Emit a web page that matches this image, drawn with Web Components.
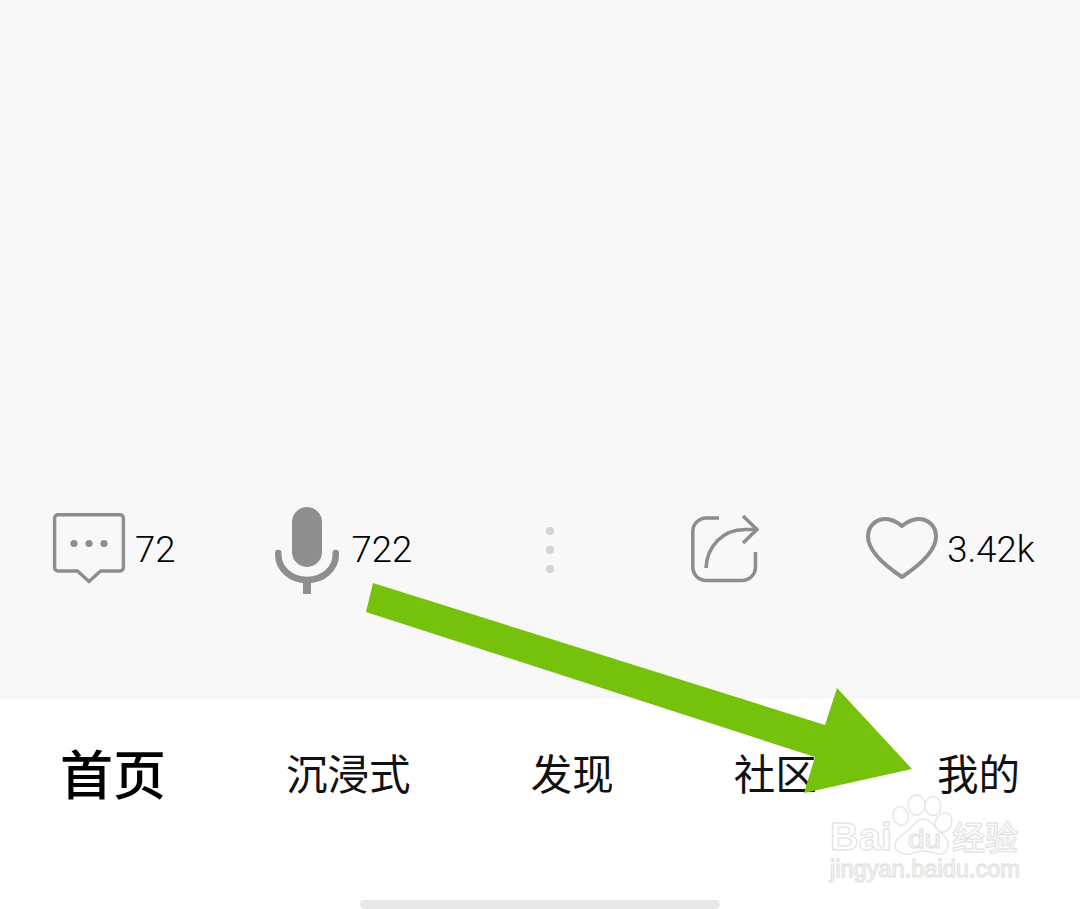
<!DOCTYPE html>
<html lang="zh">
<head>
<meta charset="utf-8">
<title>Reference</title>
<style>
  html, body { margin: 0; padding: 0; background: #fff; }
  body { width: 1080px; height: 909px; overflow: hidden; position: relative; font-family: Roboto, "Noto Sans CJK SC", sans-serif; }
</style>
</head>
<body>
<app-screen>
  <action-bar>
    <action-item gap="0" count="72" textgap="10">
      <svg width="72" height="70" viewBox="0 0 72 70" fill="none" stroke="#8e8e8e" stroke-width="3.4" stroke-linejoin="round">
        <path d="M5 1.7H67a3.4 3.4 0 0 1 3.4 3.4V54.6a3.4 3.4 0 0 1-3.4 3.4H47.5L36 68.6 24.5 58H5a3.4 3.4 0 0 1-3.4-3.4V5.1A3.4 3.4 0 0 1 5 1.7Z"/>
        <g fill="#8e8e8e" stroke="none"><circle cx="21" cy="30.500" r="3.600"/><circle cx="36" cy="30.500" r="3.600"/><circle cx="51" cy="30.500" r="3.600"/></g>
      </svg>
    </action-item>
    <action-item gap="99" count="722" textgap="13">
      <svg style="margin-top:4px" width="64" height="87" viewBox="0 0 64 87" fill="none" stroke="#8e8e8e" stroke-width="6.500">
        <rect x="17" y="0" width="30" height="60" rx="15" fill="#8e8e8e" stroke="none"/>
        <path d="M3.300 46V48A28.700 25 0 0 0 60.700 48V46" stroke-linecap="round"/>
        <path d="M32 74V87" stroke-width="8"/>
      </svg>
    </action-item>
    <more-dots></more-dots>
    <action-item gap="137" textgap="0">
      <svg width="68" height="68" viewBox="0 0 68 68" fill="none" stroke="#8e8e8e" stroke-width="3.500">
        <path d="M28 4H15A13.500 13.500 0 0 0 1.800 17.500V53A13.500 13.500 0 0 0 15 66.500H51A13.500 13.500 0 0 0 64.500 53V38"/>
        <path d="M15 54C16 32 32 15.500 54 15.500H66"/>
        <path d="M52 2L66 15.500L52 29"/>
      </svg>
    </action-item>
    <action-item gap="107" count="3.42k" textgap="9">
      <svg width="72" height="62" viewBox="0 0 72 62" fill="none" stroke="#8e8e8e" stroke-width="4">
        <path d="M36 60C24 52 2 36 2 19.500C2 9 10 2 19.500 2C26 2 31 5 36 9C41 5 46 2 52.500 2C62 2 70 9 70 19.500C70 36 48 52 36 60Z" stroke-linejoin="round"/>
      </svg>
    </action-item>
  </action-bar>
  <tab-bar>
    <tab-item active>首页</tab-item>
    <tab-item>沉浸式</tab-item>
    <tab-item>发现</tab-item>
    <tab-item>社区</tab-item>
    <tab-item>我的</tab-item>
  </tab-bar>
  <home-indicator></home-indicator>
  <arrow-mark></arrow-mark>
  <baidu-mark></baidu-mark>
</app-screen>
<script>
class AppScreen extends HTMLElement {
  constructor() {
    super();
    this.attachShadow({ mode: 'open' });
    this.shadowRoot.innerHTML = `
      <style>
        :host { display: flex; flex-direction: column; width: 1080px; height: 909px; position: relative; overflow: hidden; background: #fff; }
      </style>
      <slot></slot>
    `;
  }
}

class ActionBar extends HTMLElement {
  constructor() {
    super();
    this.attachShadow({ mode: 'open' });
    this.shadowRoot.innerHTML = `
      <style>
        :host { display: flex; align-items: center; box-sizing: border-box; height: 699px; padding: 397px 0 0 53px; background: #f8f8f8; }
      </style>
      <slot></slot>
    `;
  }
}

class ActionItem extends HTMLElement {
  constructor() {
    super();
    this.attachShadow({ mode: 'open' });
    const count = this.getAttribute('count') || '';
    this.shadowRoot.innerHTML = `
      <style>
        :host { display: flex; align-items: center; margin-left: ${this.getAttribute('gap') || 0}px; color: #000; font-size: 36.500px; font-weight: 300; line-height: 44px; }
        span { margin-left: ${this.getAttribute('textgap') || 0}px; padding-top: 3px; }
        ::slotted(svg) { display: block; overflow: visible; }
      </style>
      <slot></slot>${count ? `<span>${count}</span>` : ''}
    `;
  }
}

class MoreDots extends HTMLElement {
  constructor() {
    super();
    this.attachShadow({ mode: 'open' });
    this.shadowRoot.innerHTML = `
      <style>
        :host { display: flex; flex-direction: column; gap: 11px; margin-left: 134px; padding-top: 3px; }
        i { display: block; width: 8px; height: 8px; border-radius: 50%; background: #d4d4d4; }
      </style>
      <i></i><i></i><i></i>
    `;
  }
}

class TabBar extends HTMLElement {
  constructor() {
    super();
    this.attachShadow({ mode: 'open' });
    this.shadowRoot.innerHTML = `
      <style>
        :host { display: flex; justify-content: space-between; align-items: center; box-sizing: border-box; height: 152px; padding: 0 60px 6px 60px; }
      </style>
      <slot></slot>
    `;
  }
}

class TabItem extends HTMLElement {
  constructor() {
    super();
    this.attachShadow({ mode: 'open' });
    this.shadowRoot.innerHTML = `
      <style>
        :host { display: block; font-family: "Noto Sans CJK SC", sans-serif; font-size: 41.5px; line-height: 56px; color: #111; }
        :host([active]) { font-size: 53px; font-weight: 500; color: #000; }
      </style>
      <slot></slot>
    `;
  }
}

class HomeIndicator extends HTMLElement {
  constructor() {
    super();
    this.attachShadow({ mode: 'open' });
    this.shadowRoot.innerHTML = `
      <style>
        :host { display: block; width: 360px; height: 9px; margin: 49px auto 0; border-radius: 5px; background: #e8e8e8; }
      </style>
    `;
  }
}

class ArrowMark extends HTMLElement {
  constructor() {
    super();
    this.attachShadow({ mode: 'open' });
    this.shadowRoot.innerHTML = `
      <style>
        :host { position: absolute; left: 0; top: 0; width: 1080px; height: 909px; pointer-events: none; }
        svg { display: block; }
      </style>
      <svg width="1080" height="909" viewBox="0 0 1080 909">
        <polygon fill="#76c10c" points="373,583 825,725 837,688 912,769 804,793 815,757 366,612"/>
      </svg>
    `;
  }
}

class BaiduMark extends HTMLElement {
  constructor() {
    super();
    this.attachShadow({ mode: 'open' });
    this.shadowRoot.innerHTML = `
      <style>
        :host { position: absolute; left: 820px; top: 790px; width: 220px; height: 100px; pointer-events: none; }
        svg { display: block; }
        text { fill: #fff; stroke: #e4e4e4; stroke-width: 1.300px; stroke-linejoin: round; }
      </style>
      <svg width="220" height="100" viewBox="0 0 220 100">
        <g fill="#fff" stroke="#e4e4e4" stroke-width="1.300">
          <ellipse cx="80.500" cy="26" rx="7.500" ry="9.500" transform="rotate(-15 80.500 26)"/>
          <ellipse cx="96.500" cy="15" rx="8.500" ry="10"/>
          <ellipse cx="113" cy="16" rx="8" ry="9.500"/>
          <ellipse cx="123.500" cy="32.500" rx="8" ry="10" transform="rotate(25 123.500 32.500)"/>
          <path d="M103 29C96 29 93 37 86 42C80 46 75 50 75 55C75 61 81 65 89 64C94 63 98 61 104 61C110 61 114 63 118 64C125 65 129 59 128 53C127 47 123 45 119 41C114 36 110 29 103 29Z"/>
        </g>
        <text x="10" y="60" font-family="Liberation Sans, sans-serif" font-weight="700" font-size="38" textLength="62" lengthAdjust="spacingAndGlyphs">Bai</text>
        <text x="88" y="58" font-family="Liberation Sans, sans-serif" font-size="25" textLength="33" lengthAdjust="spacingAndGlyphs">du</text>
        <text x="132" y="60" font-family="Noto Sans CJK SC, sans-serif" font-weight="500" font-size="33">经验</text>
        <text x="10" y="87" font-family="Liberation Sans, sans-serif" font-size="23" textLength="190" lengthAdjust="spacingAndGlyphs">jingyan.baidu.com</text>
      </svg>
    `;
  }
}

customElements.define('app-screen', AppScreen);
customElements.define('action-bar', ActionBar);
customElements.define('action-item', ActionItem);
customElements.define('more-dots', MoreDots);
customElements.define('tab-bar', TabBar);
customElements.define('tab-item', TabItem);
customElements.define('home-indicator', HomeIndicator);
customElements.define('arrow-mark', ArrowMark);
customElements.define('baidu-mark', BaiduMark);
</script>
</body>
</html>
